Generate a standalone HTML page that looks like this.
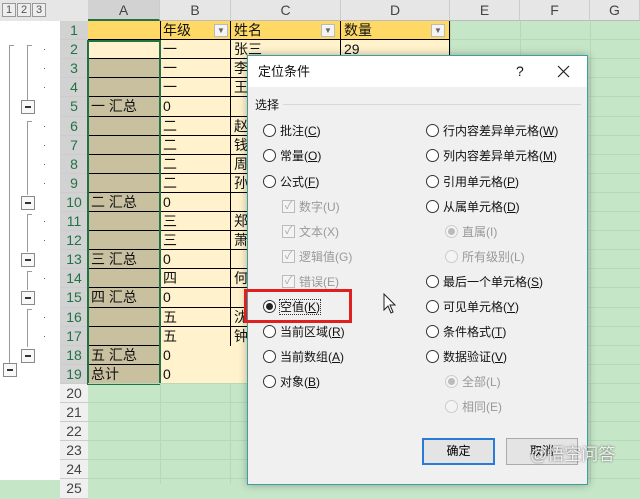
<!DOCTYPE html><html><head><meta charset="utf-8"><style>
*{margin:0;padding:0;box-sizing:border-box}
body{width:640px;height:480px;overflow:hidden;background:#c6e6c8;font-family:"Liberation Sans","Noto Sans CJK SC",sans-serif;position:relative}
.a{position:absolute}
.c{position:absolute;font-size:14px;line-height:19px;padding-left:3px;white-space:nowrap;overflow:hidden;color:#111}
.rn{position:absolute;left:60px;width:28px;text-align:center;font-size:14px;color:#444;background:#e6e6e6;border-bottom:1px solid #ccc}
.ch{position:absolute;top:0;height:21px;background:#e6e6e6;border-right:1px solid #ccc;border-bottom:1px solid #bbb;text-align:center;font-size:14px;line-height:21px;color:#444}
.dl{position:absolute;font-size:12px;color:#111;white-space:nowrap;line-height:16px}
.r{position:absolute;width:13px;height:13px;border:1px solid #333;border-radius:50%;background:#fff}
.g{color:#999}
.cb{position:absolute;width:13px;height:13px;border:1px solid #bbb;background:#f4f4f4;color:#aaa;font-size:11px;line-height:11px;text-align:center}
</style></head><body>
<div id="g"></div>
<div class="a" style="left:247px;top:55px;width:341px;height:430px;background:#f0f0f0;border:1px solid #3aa0a0;box-shadow:0 0 8px rgba(0,0,0,.3)">
<div class="a" style="left:0;top:0;width:339px;height:31px;background:#fff"></div>
<div class="dl" style="left:10px;top:8px;font-size:13px">定位条件</div>
<div class="dl" style="left:268px;top:7px;font-size:14px">?</div>
<svg class="a" style="left:309px;top:9px" width="13" height="13"><path d="M1 1L12 12M12 1L1 12" stroke="#222" stroke-width="1.2"/></svg>
<div class="dl" style="left:7px;top:41px">选择</div>
<div class="a" style="left:35px;top:48px;width:298px;height:1px;background:#d8d8d8"></div>
</div>
<div id="d"></div>
<div class="a" style="left:244px;top:289px;width:108px;height:34px;border:3px solid #e02020"></div>
<div class="a" style="left:422px;top:438px;width:73px;height:27px;border:2px solid #2a7ad8;background:#e4e4e4;font-size:12px;text-align:center;line-height:23px">确定</div>
<div class="a" style="left:506px;top:438px;width:72px;height:27px;border:1px solid #aaa;background:#e4e4e4;font-size:12px;text-align:center;line-height:25px">取消</div>
<div class="a" style="left:530px;top:440px;font-size:17px;color:rgba(255,255,255,.85);text-shadow:0 0 2px #555">@悟空问答</div>
<svg class="a" style="left:383px;top:293px" width="14" height="22"><path d="M1 1 L1 17 L5 13 L8 20 L10 19 L7 12 L12 12 Z" fill="#fff" stroke="#222" stroke-width="1"/></svg>
<script>
var h='';
function add(s){h+=s}
var cols=[[88,160,'A'],[160,231,'B'],[231,341,'C'],[341,450,'D'],[450,520,'E'],[520,590,'F'],[590,640,'G']];
add('<div class="a" style="left:0;top:0;width:640px;height:21px;background:#e6e6e6"></div>');
add('<div class="a" style="left:0;top:21px;width:60px;height:459px;background:#fff"></div>');
cols.forEach(function(c){add('<div class="ch" style="left:'+c[0]+'px;width:'+(c[1]-c[0])+'px;'+(c[2]=='A'?'background:#d2d2d2;border-bottom:2px solid #217346;':'')+'">'+c[2]+'</div>')});
['1','2','3'].forEach(function(t,i){add('<div class="a" style="left:'+(2+i*15)+'px;top:3px;width:14px;height:14px;border:1px solid #999;font-size:11px;text-align:center;line-height:12px;color:#555;background:#eee">'+t+'</div>')});
function T(n){return Math.round(21+(n-1)*19.1)}
for(var n=1;n<=25;n++){add('<div class="rn" style="top:'+T(n)+'px;height:'+(T(n+1)-T(n))+'px;line-height:19px;'+(n<=19?'background:#d2d2d2;color:#217346':'background:#f0f0f0')+'">'+n+'</div>')}
add('<div class="a" style="left:88px;top:21px;width:362px;height:19px;background:#ffd966"></div>');
add('<div class="a" style="left:88px;top:40px;width:362px;height:'+(T(20)-40)+'px;background:#fff2cc"></div>');
add('<div class="a" style="left:88px;top:'+T(3)+'px;width:72px;height:'+(T(20)-T(3))+'px;background:#c9c0a0"></div>');
var A={5:'一 汇总',10:'二 汇总',13:'三 汇总',15:'四 汇总',18:'五 汇总',19:'总计'};
var B={2:'一',3:'一',4:'一',5:'0',6:'二',7:'二',8:'二',9:'二',10:'0',11:'三',12:'三',13:'0',14:'四',15:'0',16:'五',17:'五',18:'0',19:'0'};
var C={2:'张三',3:'李',4:'王',6:'赵',7:'钱',8:'周',9:'孙',11:'郑',12:'萧',14:'何',16:'沈',17:'钟'};
add('<div class="c" style="left:160px;top:21px">年级</div><div class="c" style="left:231px;top:21px">姓名</div><div class="c" style="left:341px;top:21px">数量</div><div class="c" style="left:341px;top:40px">29</div>');
[214,321,431].forEach(function(x){add('<div class="a" style="left:'+x+'px;top:24px;width:14px;height:13px;border:1px solid #bbb;background:#f4f4f4;font-size:8px;text-align:center;line-height:12px;color:#666">▼</div>')});
for(var n=2;n<=19;n++){var t=T(n);
if(A[n])add('<div class="c" style="left:88px;top:'+t+'px">'+A[n]+'</div>');
if(B[n])add('<div class="c" style="left:160px;top:'+t+'px">'+B[n]+'</div>');
if(C[n])add('<div class="c" style="left:231px;top:'+t+'px">'+C[n]+'</div>');}
for(var n=2;n<=19;n++){
add('<div class="a" style="left:88px;top:'+(T(n)-1)+'px;width:'+(n==2?362:(n==18||n==19?72:253))+'px;height:1px;background:#000"></div>');}
add('<div class="a" style="left:160px;top:21px;width:1px;height:'+(T(20)-21)+'px;background:#000"></div>');
add('<div class="a" style="left:230px;top:21px;width:1px;height:'+(T(18)-21)+'px;background:#000"></div>');
add('<div class="a" style="left:340px;top:21px;width:1px;height:38px;background:#000"></div>');
add('<div class="a" style="left:449px;top:21px;width:1px;height:38px;background:#000"></div>');
add('<div class="a" style="left:87px;top:40px;width:74px;height:'+(T(20)-39)+'px;border:2px solid #217346"></div>');
for(var n=20;n<=25;n++)add('<div class="a" style="left:88px;top:'+(T(n)-1)+'px;width:552px;height:1px;background:#b8d8ba"></div>');
[160,230,340,450,520,590].forEach(function(x){add('<div class="a" style="left:'+x+'px;top:'+T(20)+'px;width:1px;height:100px;background:#b8d8ba"></div>')});
[450,520,590].forEach(function(x){add('<div class="a" style="left:'+x+'px;top:21px;width:1px;height:361px;background:#b8d8ba"></div>')});
for(var n=2;n<=25;n++)add('<div class="a" style="left:450px;top:'+(T(n)-1)+'px;width:190px;height:1px;background:#b8d8ba"></div>');
add('<div class="a" style="left:9px;top:45px;width:1px;height:320px;background:#999"></div><div class="a" style="left:9px;top:45px;width:5px;height:1px;background:#999"></div>');
[[45,100,5],[121,195,10],[214,252,13],[271,290,15],[309,347,18]].forEach(function(g){add('<div class="a" style="left:27px;top:'+g[0]+'px;width:1px;height:'+(g[1]-g[0])+'px;background:#999"></div><div class="a" style="left:27px;top:'+g[0]+'px;width:5px;height:1px;background:#999"></div>');
var t=T(g[2])+3;add('<div class="a" style="left:21px;top:'+t+'px;width:14px;height:14px;border:1px solid #888;background:#f8f8f8"><div class="a" style="left:3px;top:5px;width:6px;height:2px;background:#333"></div></div>')});
add('<div class="a" style="left:3px;top:363px;width:14px;height:14px;border:1px solid #888;background:#f8f8f8"><div class="a" style="left:3px;top:5px;width:6px;height:2px;background:#333"></div></div>');
[2,3,4,6,7,8,9,11,12,14,16,17].forEach(function(n){add('<div class="a" style="left:44px;top:'+(T(n)+9)+'px;width:1px;height:1px;background:#666"></div>')});
var d='';
function R(x,y,t,opt){opt=opt||'';var gray=opt.indexOf('g')>=0;
d+='<div class="r" style="left:'+(x-7)+'px;top:'+(y-7)+'px;'+(gray?'border-color:#ccc;background:#f4f4f4':'')+'">'+(opt.indexOf('s')>=0?'<div class="a" style="left:2px;top:2px;width:7px;height:7px;border-radius:50%;background:'+(gray?'#bbb':'#222')+'"></div>':'')+'</div>';
d+='<div class="dl'+(gray?' g':'')+'" style="left:'+(x+10)+'px;top:'+(y-8)+'px">'+t+'</div>';}
function K(x,y,t){d+='<div class="cb" style="left:'+(x-7)+'px;top:'+(y-7)+'px">✓</div><div class="dl g" style="left:'+(x+10)+'px;top:'+(y-8)+'px">'+t+'</div>'}
R(270,131,'批注(<u>C</u>)');R(270,156,'常量(<u>O</u>)');R(270,182,'公式(<u>F</u>)');
K(289,207,'数字(U)');K(289,232,'文本(X)');K(289,257,'逻辑值(G)');K(289,282,'错误(E)');
R(270,307,'<span style="outline:1px dotted #333">空值(<u>K</u>)</span>','s');R(270,332,'当前区域(<u>R</u>)');R(270,357,'当前数组(<u>A</u>)');R(270,382,'对象(<u>B</u>)');
R(433,131,'行内容差异单元格(<u>W</u>)');R(433,156,'列内容差异单元格(<u>M</u>)');R(433,182,'引用单元格(<u>P</u>)');R(433,207,'从属单元格(<u>D</u>)');
R(452,232,'直属(I)','gs');R(452,257,'所有级别(L)','g');
R(433,282,'最后一个单元格(<u>S</u>)');R(433,307,'可见单元格(<u>Y</u>)');R(433,332,'条件格式(<u>T</u>)');R(433,357,'数据验证(<u>V</u>)');
R(452,382,'全部(L)','gs');R(452,407,'相同(E)','g');
document.getElementById('g').innerHTML=h;
document.getElementById('d').innerHTML=d;
</script>
</body></html>
